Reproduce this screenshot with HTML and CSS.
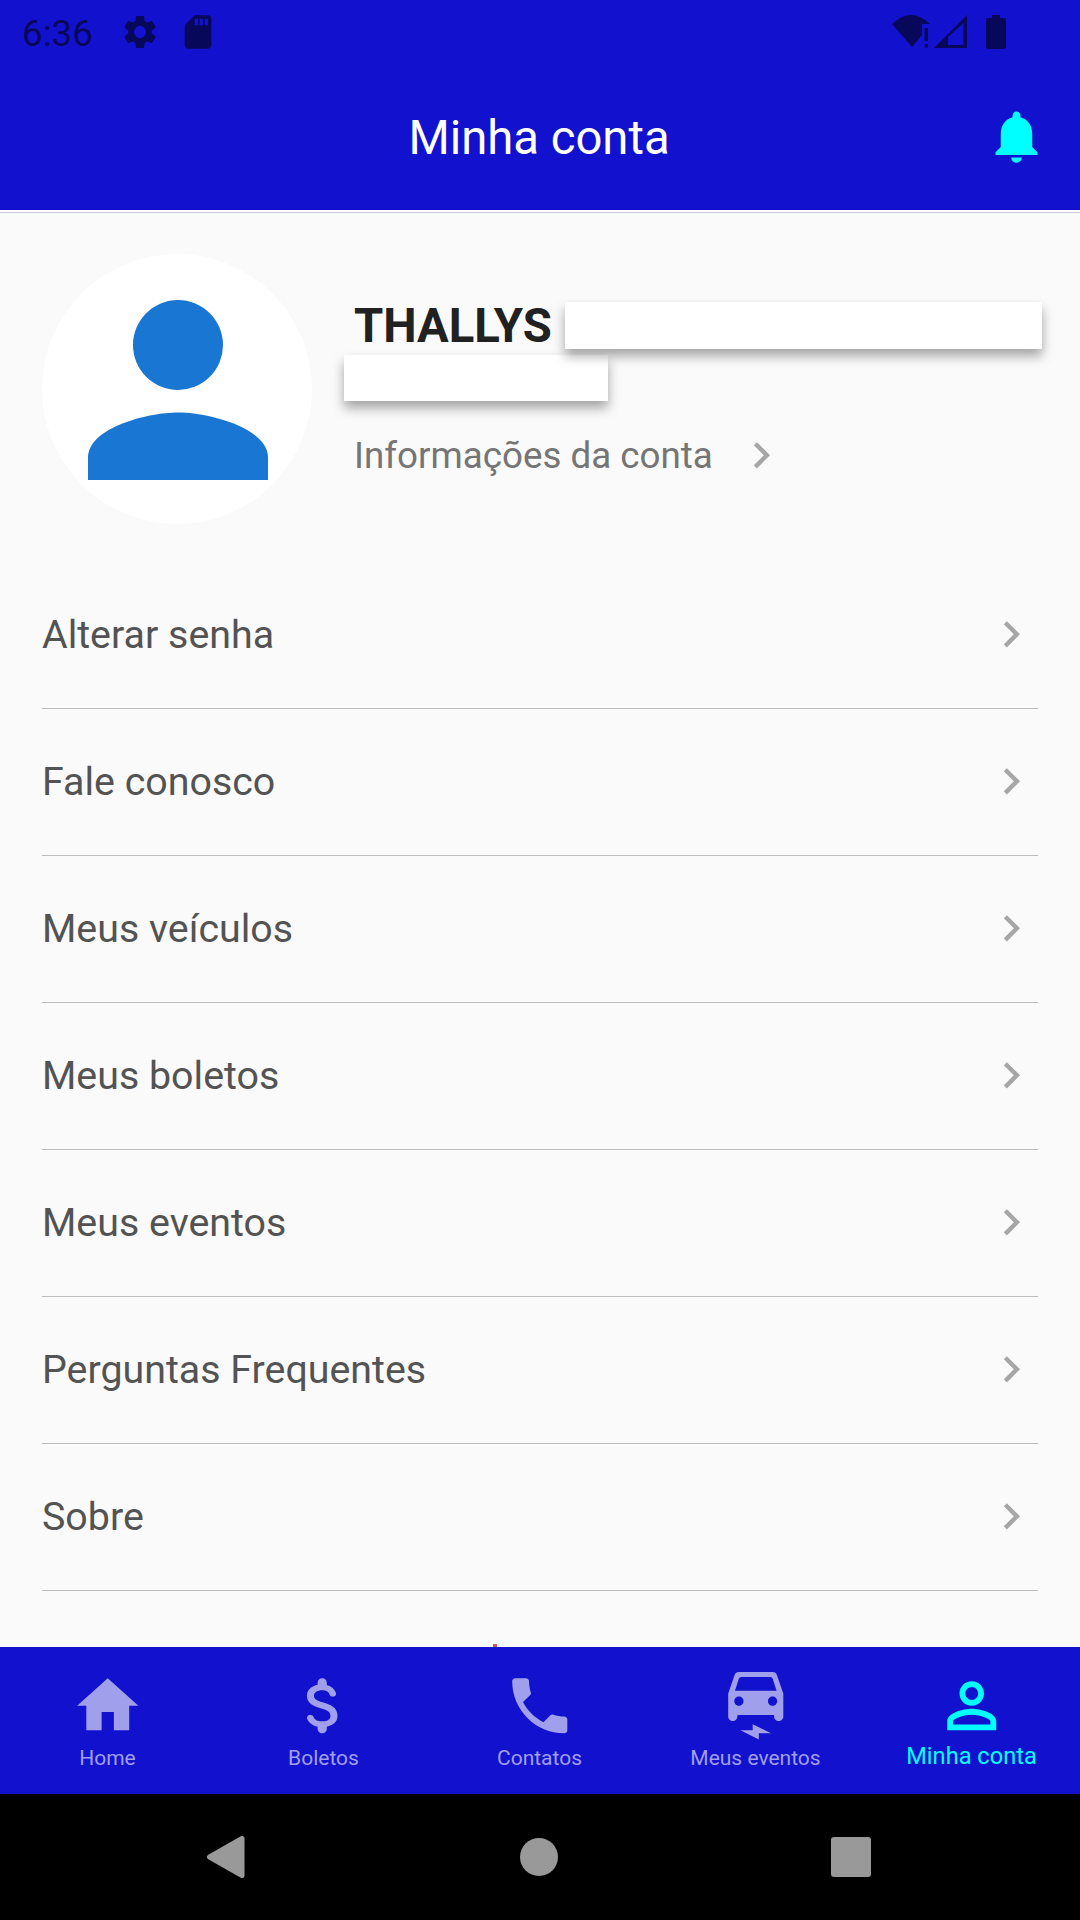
FILE: index.html
```html
<!DOCTYPE html>
<html lang="pt-BR">
  <head>
    <meta charset="UTF-8" />
    <meta name="viewport" content="width=device-width, initial-scale=1.0" />
    <title>Minha conta</title>
    <link rel="stylesheet" href="styles.css">
  </head>
  <body>
    <svg class="sprite">
      <symbol id="chevron" viewBox="0 0 24 24">
        <path d="M10 6L8.59 7.41 13.17 12l-4.58 4.59L10 18l6-6z" />
      </symbol>
    </svg>

    <div class="status-bar">
      <span class="time">6:36</span>
      <svg class="gear" viewBox="0 0 24 24"><path d="M19.14 12.94c.04-.3.06-.61.06-.94 0-.32-.02-.64-.07-.94l2.03-1.58c.18-.14.23-.41.12-.61l-1.92-3.32c-.12-.22-.37-.29-.59-.22l-2.39.96c-.5-.38-1.03-.7-1.62-.94l-.36-2.54c-.04-.24-.24-.41-.48-.41h-3.84c-.24 0-.43.17-.47.41l-.36 2.54c-.59.24-1.13.57-1.62.94l-2.39-.96c-.22-.08-.47 0-.59.22L2.74 8.87c-.12.21-.08.47.12.61l2.03 1.58c-.05.3-.09.63-.09.94s.02.64.07.94l-2.03 1.58c-.18.14-.23.41-.12.61l1.92 3.32c.12.22.37.29.59.22l2.39-.96c.5.38 1.03.7 1.62.94l.36 2.54c.05.24.24.41.48.41h3.84c.24 0 .44-.17.47-.41l.36-2.54c.59-.24 1.13-.56 1.62-.94l2.39.96c.22.08.47 0 .59-.22l1.92-3.32c.12-.22.07-.47-.12-.61l-2.01-1.58zM12 15.6c-1.98 0-3.6-1.62-3.6-3.6s1.62-3.6 3.6-3.6 3.6 1.62 3.6 3.6-1.62 3.6-3.6 3.6z" /></svg>
      <svg class="sd" viewBox="0 0 24 24"><path d="M18 2h-8L4.02 8 4 20c0 1.1.9 2 2 2h12c1.1 0 2-.9 2-2V4c0-1.1-.9-2-2-2zm-6 6h-2V4h2v4zm3 0h-2V4h2v4zm3 0h-2V4h2v4z" /></svg>
      <div class="signals">
        <svg class="wifi" viewBox="0 0 38 34"><path d="M0 9Q19 -9 38 9H30V20L20 32Z" /><path d="M32.5 13h3.5v13h-3.5zM32.5 29h3.5v3.5h-3.5z" /></svg>
        <svg class="cell" viewBox="0 0 34 34"><path fill-rule="evenodd" d="M0 33L33 0V33ZM14 22V30H29.5V8Z" /></svg>
        <svg class="battery" viewBox="0 0 20 34"><path d="M6 0h8v3h4q2 0 2 2v27q0 2-2 2H2q-2 0-2-2V5q0-2 2-2h4z" /></svg>
      </div>
    </div>

    <header class="header">
      <h1>Minha conta</h1>
      <svg class="bell" viewBox="0 0 24 24"><path d="M12 22c1.1 0 2-.9 2-2h-4c0 1.1.89 2 2 2zm6-6v-5c0-3.07-1.64-5.64-4.5-6.32V4c0-.83-.67-1.5-1.5-1.5s-1.5.67-1.5 1.5v.68C7.63 5.36 6 7.92 6 11v5l-2 2v1h16v-1l-2-2z" /></svg>
    </header>

    <main class="content">
      <section class="profile">
        <div class="avatar">
          <svg viewBox="0 0 24 24"><circle cx="12" cy="8" r="4" /><path d="M12 14c-2.67 0-8 1.34-8 4v2h16v-2c0-2.66-5.33-4-8-4z" /></svg>
        </div>
        <div class="profile-info">
          <div class="name-row">
            <span class="name">THALLYS</span>
            <span class="mask mask-first"></span>
          </div>
          <div class="mask mask-second"></div>
          <a class="info-link">
            <span>Informações da conta</span>
            <svg class="chevron"><use href="#chevron" /></svg>
          </a>
        </div>
      </section>

      <ul class="menu">
        <li><span>Alterar senha</span><svg class="chevron"><use href="#chevron" /></svg></li>
        <li><span>Fale conosco</span><svg class="chevron"><use href="#chevron" /></svg></li>
        <li><span>Meus veículos</span><svg class="chevron"><use href="#chevron" /></svg></li>
        <li><span>Meus boletos</span><svg class="chevron"><use href="#chevron" /></svg></li>
        <li><span>Meus eventos</span><svg class="chevron"><use href="#chevron" /></svg></li>
        <li><span>Perguntas Frequentes</span><svg class="chevron"><use href="#chevron" /></svg></li>
        <li><span>Sobre</span><svg class="chevron"><use href="#chevron" /></svg></li>
      </ul>
      <div class="logout-peek"></div>
    </main>

    <nav class="tabs">
      <a class="tab">
        <svg viewBox="0 0 24 24"><path d="M10 20v-6h4v6h5v-8h3L12 3 2 12h3v8z" /></svg>
        <span>Home</span>
      </a>
      <a class="tab">
        <svg viewBox="0 0 24 24"><path d="M11.8 10.9c-2.27-.59-3-1.2-3-2.15 0-1.09 1.01-1.85 2.7-1.85 1.42 0 2.13.54 2.39 1.4.12.4.45.7.87.7h.3c.66 0 1.13-.65.9-1.27-.42-1.18-1.4-2.16-2.96-2.54V4.5c0-.83-.67-1.5-1.5-1.5S10 3.67 10 4.5v.66c-1.94.42-3.5 1.68-3.5 3.61 0 2.31 1.91 3.46 4.7 4.13 2.5.6 3 1.48 3 2.41 0 .69-.49 1.79-2.7 1.79-1.65 0-2.5-.59-2.83-1.43-.15-.39-.49-.67-.9-.67h-.28c-.67 0-1.14.68-.89 1.3.57 1.39 1.9 2.21 3.4 2.53v.67c0 .83.67 1.5 1.5 1.5s1.5-.67 1.5-1.5v-.65c1.95-.37 3.5-1.5 3.5-3.55 0-2.84-2.43-3.81-4.7-4.4z" /></svg>
        <span>Boletos</span>
      </a>
      <a class="tab">
        <svg viewBox="0 0 24 24"><path d="M6.54 10.79c1.44 2.83 3.84 5.14 6.67 6.59l2.2-2.2c.27-.27.67-.36 1.02-.24 1.12.37 2.33.57 3.57.57.55 0 1 .45 1 1V20c0 .55-.45 1-1 1-9.39 0-17-7.61-17-17 0-.55.45-1 1-1h3.5c.55 0 1 .45 1 1 0 1.25.2 2.45.57 3.57.11.35.03.74-.25 1.02z" /></svg>
        <span>Contatos</span>
      </a>
      <a class="tab">
        <svg viewBox="0 0 24 24"><path fill-rule="evenodd" d="M18.92 2.01C18.72 1.42 18.16 1 17.5 1h-11c-.66 0-1.21.42-1.42 1.01L3 8v7.5c0 .83.67 1.5 1.5 1.5S6 16.33 6 15.5V15h12v.5c0 .83.67 1.5 1.5 1.5s1.5-.67 1.5-1.5V8l-2.08-5.99zM6.5 12C5.67 12 5 11.33 5 10.5S5.67 9 6.5 9 8 9.67 8 10.5 7.33 12 6.5 12zm11 0c-.83 0-1.5-.67-1.5-1.5S16.67 9 17.5 9s1.5.67 1.5 1.5-.67 1.5-1.5 1.5zM5.2 7.1l1.3-4q.2-.5.7-.5h9.6q.5 0 .7.5l1.3 4z" /><path d="M7 20h4v-2l6 3h-4v2z" /></svg>
        <span>Meus eventos</span>
      </a>
      <a class="tab active">
        <svg viewBox="0 0 24 24"><path d="M12 5.9c1.16 0 2.1.94 2.1 2.1s-.94 2.1-2.1 2.1S9.9 9.16 9.9 8s.94-2.1 2.1-2.1m0 9c2.97 0 6.1 1.46 6.1 2.1v1.1H5.9V17c0-.64 3.13-2.1 6.1-2.1M12 4C9.79 4 8 5.79 8 8s1.79 4 4 4 4-1.79 4-4-1.79-4-4-4zm0 9c-2.67 0-8 1.34-8 4v3h16v-3c0-2.66-5.33-4-8-4z" /></svg>
        <span>Minha conta</span>
      </a>
    </nav>

    <div class="system-nav">
      <svg class="back" viewBox="0 0 38 42"><path d="M35 2.5V39.5L2.5 21Z" /></svg>
      <span class="home-button"></span>
      <span class="recents"></span>
    </div>
  </body>
</html>
```
FILE: styles.css
```css
* {
  box-sizing: border-box;
}

body {
  margin: 0;
  width: 1080px;
  height: 1920px;
  overflow: hidden;
  display: flex;
  flex-direction: column;
  font-family: Roboto, sans-serif;
  background-color: #fafafa;
}

svg {
  display: block;
  flex: none;
  fill: currentColor;
}

.sprite {
  display: none;
}

/* status bar */

.status-bar {
  height: 63px;
  display: flex;
  align-items: center;
  padding: 0 74px 0 22px;
  background-color: #1212ce;
  color: #08085a;
}

.time {
  width: 98px;
  font-size: 36.75px;
  line-height: 43px;
  padding-top: 3px;
}

.gear,
.sd {
  width: 40px;
  height: 40px;
}

.sd {
  margin-left: 18px;
}

.signals {
  display: flex;
  align-items: center;
  margin-left: auto;
}

.wifi {
  width: 38px;
  height: 34px;
}

.cell {
  width: 34px;
  height: 34px;
  margin-left: 4px;
}

.battery {
  width: 20px;
  height: 34px;
  margin-left: 18px;
}

/* header */

.header {
  height: 150px;
  display: grid;
  grid-template-columns: 1fr auto 1fr;
  align-items: center;
  padding: 0 32px 3px 30px;
  background: linear-gradient(#1212ce 147px, #fff 147px, #fff 149px, #c6c6dc 149px);
}

.header h1 {
  grid-column: 2;
  margin: 0;
  padding-top: 2px;
  font-size: 47.25px;
  font-weight: 400;
  line-height: 56px;
  color: #fff;
}

.bell {
  width: 63px;
  height: 63px;
  justify-self: end;
  color: #00ffff;
}

/* profile */

.content {
  flex: 1;
  min-height: 0;
  overflow: hidden;
  padding: 41px 42px 0;
}

.profile {
  display: flex;
}

.avatar {
  flex: none;
  width: 270px;
  height: 270px;
  padding: 1px 0 0 1px;
  border-radius: 50%;
  background-color: #fff;
  color: #1976d2;
}

.avatar svg {
  width: 270px;
  height: 270px;
}

.profile-info {
  padding: 48px 0 0 42px;
}

.name-row {
  display: flex;
  height: 47px;
}

.name {
  width: 211px;
  font-size: 47.25px;
  font-weight: 700;
  line-height: 49px;
  color: #212121;
}

.mask {
  background-color: #fff;
  box-shadow: 0 7px 11px rgba(0, 0, 0, 0.35);
}

.mask-first {
  width: 477px;
}

.mask-second {
  width: 264px;
  height: 46px;
  margin: 6px 0 0 -10px;
}

.info-link {
  display: flex;
  align-items: center;
  gap: 22px;
  margin-top: 28px;
  font-size: 36.75px;
  color: #757575;
}

.chevron {
  width: 52.5px;
  height: 52.5px;
  color: #a6a6a6;
}

/* menu */

.menu {
  list-style: none;
  margin: 38px 0 0;
  padding: 0;
}

.menu li {
  height: 147px;
  display: flex;
  align-items: center;
  justify-content: space-between;
  padding: 0 1px 2px 0;
  border-bottom: 1px solid #bdbdbd;
  font-size: 39.375px;
  color: #535353;
}

.logout-peek {
  width: 4px;
  height: 3px;
  margin: 53px 0 0 451px;
  background-color: #c75b62;
}

/* bottom tabs */

.tabs {
  flex: none;
  height: 147px;
  display: flex;
  background-color: #1212ce;
}

.tab {
  flex: 1;
  display: flex;
  flex-direction: column;
  align-items: center;
  padding: 22px 1px 0 0;
  font-size: 21px;
  line-height: 30px;
  color: #a09fec;
}

.tab svg {
  width: 73.5px;
  height: 73.5px;
}

.tab.active {
  font-size: 23.625px;
  line-height: 27px;
  color: #00ffff;
}

/* android navigation */

.system-nav {
  flex: none;
  height: 126px;
  display: flex;
  align-items: center;
  justify-content: space-between;
  padding: 0 209px 0 207px;
  background-color: #000;
  color: #999;
}

.back {
  width: 38px;
  height: 42px;
  margin-right: 2px;
  stroke: currentColor;
  stroke-width: 5px;
  stroke-linejoin: round;
}

.home-button {
  width: 38px;
  height: 38px;
  border-radius: 50%;
  background-color: #999;
}

.recents {
  width: 40px;
  height: 40px;
  border-radius: 3px;
  background-color: #999;
}
```
